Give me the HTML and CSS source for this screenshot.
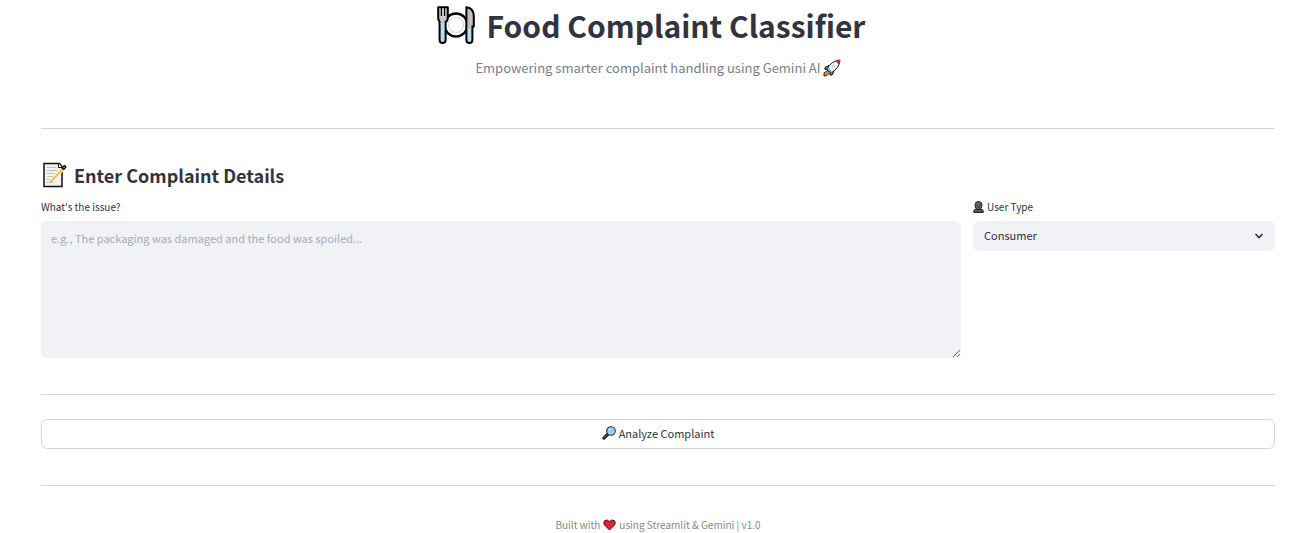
FILE: index.html
```html
<!DOCTYPE html>
<html lang="en">
<head>
<meta charset="utf-8">
<title>Food Complaint Classifier</title>
<link rel="stylesheet" href="styles.css">
</head>
<body>
<main class="page">
  <header class="hero">
    <h1 class="title">
      <svg class="icon-plate" viewBox="0 0 38 38" aria-hidden="true">
        <circle cx="19" cy="19" r="11.500" fill="#fff" stroke="#000" stroke-width="2.300"/>
        <circle cx="19" cy="19" r="7.500" fill="#fff" stroke="#ddd" stroke-width="1.200"/>
        <rect x="2.600" y="14" width="6" height="23" rx="3" fill="#b9dff5" stroke="#000" stroke-width="2"/>
        <path d="M1.200 1.200h9.600v10.300q0 3.500-2.200 4.500h-5.200Q1.200 15 1.200 11.500z" fill="#c9c9c9" stroke="#000" stroke-width="2" stroke-linejoin="round"/>
        <path d="M4.400 1v9M7.600 1v9" stroke="#000" stroke-width="1.200"/>
        <path d="M3.600 14h4v4h-4z" fill="#c9c9c9"/>
        <rect x="29.400" y="18" width="6" height="19" rx="3" fill="#b9dff5" stroke="#000" stroke-width="2"/>
        <path d="M29.400 1.200q7.400 1 7.400 8.800v10.500h-7.400z" fill="#c2c2c2" stroke="#000" stroke-width="2" stroke-linejoin="round"/>
        <path d="M30.400 19h4v3h-4z" fill="#c2c2c2"/>
      </svg>
      <span>Food Complaint Classifier</span>
    </h1>
    <p class="subtitle">
      <span>Empowering smarter complaint handling using Gemini AI</span>
      <svg class="icon-rocket" viewBox="0 0 18 18" aria-hidden="true">
        <path d="M6 6.500L2 8.500v2l3-.5M11 12L9 16H7l.5-3.500" fill="#55bce8" stroke="#000"/>
        <path d="M4.500 11.500L1 14v3l3-.5 2.500-2.500z" fill="#f28a1e" stroke="#000" stroke-width=".8"/>
        <path d="M4 10Q8 2 17 1q-.5 8-9 13z" fill="#f5f8fa" stroke="#000" stroke-width=".9"/>
        <path d="M12.500 2.200Q15 1 17 1q0 2.500-1.200 4.500z" fill="#e52630"/>
        <path d="M4.200 10L8 14l1.300-1L5.200 8.500z" fill="#55bce8"/>
        <circle cx="10.500" cy="7.200" r="1.300" fill="#dcebf2" stroke="#bbb" stroke-width=".6"/>
      </svg>
    </p>
  </header>
  <hr class="divider">
  <section class="details">
    <h2 class="heading">
      <svg class="icon-memo" viewBox="0 0 26 26" aria-hidden="true">
        <path d="M3 1.500h15.500l2.500 3v20H3z" fill="#f3f3f3" stroke="#111" stroke-width="1.500"/>
        <path d="M5.500 5.500h10M5.500 8.500h11M5.500 11.500h9M5.500 14.500h7M5.500 17.500h4M5.500 20.500h8" stroke="#c2c2c2"/>
        <path d="M17.500 1.500v4H21" fill="#fff" stroke="#111"/>
        <path d="M10 20L21.500 7" stroke="#fff" stroke-width="3.500"/>
        <path d="M10.200 19.500L22 6.500" stroke="#f5c23c" stroke-width="2.200"/>
        <path d="M8.500 21l1-2.500 1.600 1.500z" fill="#d69b65"/>
        <path d="M21 6l2-2.300q1.500-.2 2 1.500L22.800 7.500z" fill="#bd7c6a" stroke="#000" stroke-width="1.200"/>
      </svg>
      <span>Enter Complaint Details</span>
    </h2>
    <div class="columns">
      <div class="field">
        <label class="label" for="issue">What's the issue?</label>
        <textarea class="issue" id="issue" placeholder="e.g., The packaging was damaged and the food was spoiled..."></textarea>
      </div>
      <div class="field">
        <label class="label" for="user-type">
          <svg class="icon-user" viewBox="0 0 11 12" aria-hidden="true">
            <path d="M.8 11.500V9.800q.2-1.500 2.700-1.800h4q2.500.3 2.700 1.800v1.700z" fill="#555" stroke="#222"/>
            <path d="M2 3.800Q2 .6 5.500.6T9 3.800Q9 8.500 5.500 8.500T2 3.800z" fill="#666" stroke="#222"/>
            <path d="M3.600 4.200h1.200M6.200 4.200h1.200M4.300 6.300h2.400" stroke="#222" stroke-width=".7"/>
          </svg>
          <span>User Type</span>
        </label>
        <div class="select-wrap">
          <select class="select" id="user-type"><option>Consumer</option></select>
          <svg class="chevron" viewBox="0 0 10 6" aria-hidden="true"><path d="M1.500 1L5 4.500 8.500 1" fill="none" stroke="#31333f" stroke-width="1.600"/></svg>
        </div>
      </div>
    </div>
  </section>
  <hr class="divider">
  <button class="analyze" type="button">
    <svg class="icon-lens" viewBox="0 0 14 14" aria-hidden="true">
      <path d="M6 8L1.900 12.100" stroke="#222" stroke-width="3.200" stroke-linecap="round"/>
      <path d="M5 9L2 12" stroke="#666" stroke-width="1" stroke-linecap="round"/>
      <circle cx="9" cy="5" r="4.300" fill="#9cccf0" stroke="#333" stroke-width="1.100"/>
      <path d="M6.800 4.800Q7 3 9 2.800" fill="none" stroke="#cde7f8"/>
    </svg>
    <span>Analyze Complaint</span>
  </button>
  <hr class="divider">
  <footer class="footer">
    <span>Built with</span>
    <svg class="icon-heart" viewBox="0 0 13 12" aria-hidden="true"><path d="M6.500 11L1.500 6Q0 3.500 1.500 1.800 4.200-.2 6.500 2.500 8.800-.2 11.500 1.800 13 3.500 11.500 6z" fill="#ea1f2c" stroke="#222"/></svg>
    <span>using Streamlit &amp; Gemini | v1.0</span>
  </footer>
</main>
</body>
</html>
```

FILE: styles.css
```css
* { box-sizing: border-box; }

body {
  margin: 0;
  background: #fff;
  color: #31333f;
  font-family: "Noto Sans CJK SC", "Noto Sans", sans-serif;
  font-size: 11px;
}

.page { padding: 0 23px 0 41px; }

.title, .subtitle, .heading, .label, .analyze, .footer {
  display: flex;
  align-items: center;
}

.title, .subtitle, .analyze, .footer { justify-content: center; }

.title {
  gap: 12px;
  margin: 0;
  padding-right: 14px;
  font-size: 30px;
  font-weight: 700;
  line-height: 50px;
}

.subtitle {
  gap: 2px;
  margin: 8px 0 0;
  color: #7a7e87;
  font-size: 13px;
  line-height: 20px;
}

.icon-plate { width: 38px; height: 38px; }
.icon-rocket { width: 18px; height: 18px; }
.icon-memo { width: 26px; height: 26px; }
.icon-user { width: 11px; height: 12px; }
.icon-lens { width: 14px; height: 14px; }
.icon-heart { width: 13px; height: 12px; }

.divider {
  margin: 0;
  border: 0;
  border-top: 1px solid #d6d6d9;
}

.hero { padding-bottom: 50px; }
.details { padding: 30px 0 36px; }

.heading {
  gap: 7px;
  margin: 0;
  font-size: 18px;
  font-weight: 600;
  line-height: 32px;
}

.columns {
  display: grid;
  grid-template-columns: 920fr 302fr;
  gap: 12px;
  padding-top: 8px;
}

.field { display: flex; flex-direction: column; }

.label {
  gap: 3px;
  padding-bottom: 6px;
  font-size: 10px;
  line-height: 16px;
}

.issue, .select, .analyze {
  color: inherit;
  font-family: inherit;
  font-size: 11px;
}

.issue {
  width: 100%;
  height: 137px;
  padding: 9px 10px;
  border: 0;
  border-radius: 6px;
  background: #f0f2f6;
  line-height: 16px;
  resize: vertical;
}

.issue::placeholder { color: #a9abb3; }

.select-wrap { display: grid; align-items: center; }

.select {
  grid-area: 1 / 1;
  width: 100%;
  height: 30px;
  padding: 0 11px 2px;
  border: 0;
  border-radius: 6px;
  background: #f0f2f6;
  appearance: none;
}

.chevron {
  grid-area: 1 / 1;
  justify-self: end;
  width: 10px;
  height: 6px;
  margin-right: 11px;
  pointer-events: none;
}

.analyze {
  gap: 3px;
  width: 100%;
  height: 30px;
  margin: 24px 0 36px;
  padding: 0 12px 2px;
  border: 1px solid #d6d6d9;
  border-radius: 6px;
  background: #fff;
}

.footer {
  gap: 3px;
  padding-top: 31px;
  color: #888;
  font-size: 10px;
  line-height: 16px;
}
```
